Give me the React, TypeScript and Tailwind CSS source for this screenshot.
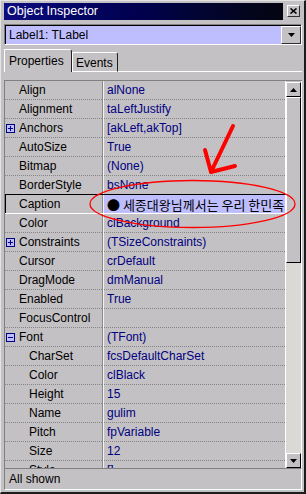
import React from 'react';

type Row = { name: string; value: string; box?: '+' | '-'; sub?: boolean; selected?: boolean };

const rows: Row[] = [
  { name: 'Align', value: 'alNone' },
  { name: 'Alignment', value: 'taLeftJustify' },
  { name: 'Anchors', value: '[akLeft,akTop]', box: '+' },
  { name: 'AutoSize', value: 'True' },
  { name: 'Bitmap', value: '(None)' },
  { name: 'BorderStyle', value: 'bsNone' },
  { name: 'Caption', value: '● 세종대왕님께서는 우리 한민족', selected: true },
  { name: 'Color', value: 'clBackground' },
  { name: 'Constraints', value: '(TSizeConstraints)', box: '+' },
  { name: 'Cursor', value: 'crDefault' },
  { name: 'DragMode', value: 'dmManual' },
  { name: 'Enabled', value: 'True' },
  { name: 'FocusControl', value: '' },
  { name: 'Font', value: '(TFont)', box: '-' },
  { name: 'CharSet', value: 'fcsDefaultCharSet', sub: true },
  { name: 'Color', value: 'clBlack', sub: true },
  { name: 'Height', value: '15', sub: true },
  { name: 'Name', value: 'gulim', sub: true },
  { name: 'Pitch', value: 'fpVariable', sub: true },
  { name: 'Size', value: '12', sub: true },
  { name: 'Style', value: '[]', sub: true },
];

function ExpandBox({ kind }: { kind: '+' | '-' }) {
  return (
    <svg width="9" height="9" viewBox="0 0 9 9" className="shrink-0 ml-[1px] mr-[4px]">
      <rect x="0.5" y="0.5" width="8" height="8" fill="#bebeff" stroke="#000080" />
      <line x1="2" y1="4.5" x2="7" y2="4.5" stroke="#000080" />
      {kind === '+' && <line x1="4.5" y1="2" x2="4.5" y2="7" stroke="#000080" />}
    </svg>
  );
}

function Divider() {
  return (
    <>
      <div className="w-px shrink-0 bg-[#8a8a8a]" />
      <div className="w-px shrink-0 bg-[#f2f2f2]" />
    </>
  );
}

function Sep({ kind }: { kind: 'dotted' | 'black' | 'white' }) {
  if (kind === 'black') return <div className="h-px shrink-0 bg-black" />;
  if (kind === 'white') return <div className="h-px shrink-0 bg-white" />;
  return (
    <div className="flex h-px shrink-0">
      <div className="w-[97px] border-t border-dotted border-[#858585]" />
      <Divider />
      <div className="flex-1 border-t border-dotted border-[#858585]" />
    </div>
  );
}

function PropRow({ row }: { row: Row }) {
  let pad = 'pl-[14px]';
  if (row.box) pad = 'pl-0';
  else if (row.sub) pad = 'pl-[24px]';
  else if (row.selected) pad = 'pl-[13px] border-l border-black';
  return (
    <div className="flex h-[18px] shrink-0">
      <div className={`w-[97px] shrink-0 flex items-center whitespace-nowrap text-black ${pad}`}>
        {row.box && <ExpandBox kind={row.box} />}
        <span>{row.name}</span>
      </div>
      <Divider />
      <div
        className={
          row.selected
            ? "flex-1 flex items-center pl-[3px] overflow-hidden whitespace-nowrap bg-[#bebeff] text-black text-[13px] font-['Noto_Sans_CJK_KR',sans-serif]"
            : 'flex-1 flex items-center pl-[3px] overflow-hidden whitespace-nowrap text-[#000080]'
        }
      >
        {row.value}
      </div>
    </div>
  );
}

export default function App() {
  return (
    <div className="relative w-[306px] h-[494px] overflow-hidden bg-[#c4c1c4] border-l border-t border-l-[#e4e4e4] border-t-[#e4e4e4] border-r-2 border-b-2 border-r-[#1c1c1c] border-b-[#1c1c1c] pl-[3px] pr-[2px] flex flex-col font-['Liberation_Sans',sans-serif] text-[12px] leading-none text-black">
      {/* Title bar */}
      <div className="mt-[2px] h-[17px] flex shrink-0">
        <div className="w-[279px] h-full flex items-center pl-[3px] text-white text-[12.5px] bg-linear-to-r from-[#0d0d80] via-[#00004c] to-[#040410]">
          Object Inspector
        </div>
        <div className="ml-[4px] mt-[2px] w-[13px] h-[12px] border-t border-l border-t-white border-l-white border-r border-b border-r-[#303030] border-b-[#303030] bg-[#c4c1c4] flex items-center justify-center">
          <svg width="7" height="6" viewBox="0 0 7 6">
            <path d="M0.5 0.5 L6.5 5.5 M6.5 0.5 L0.5 5.5" stroke="black" strokeWidth="1.6" />
          </svg>
        </div>
      </div>

      {/* Combo box */}
      <div className="mt-[4px] h-[21px] shrink-0 border-t border-l border-t-[#808080] border-l-[#808080] border-b border-r border-b-white border-r-white">
        <div className="h-full flex border-t border-l border-black bg-[#bebeff]">
          <div className="flex-1 flex items-center pl-[3px]">Label1: TLabel</div>
          <div className="w-[20px] h-full border-t border-l border-t-white border-l-white border-r border-b border-r-[#303030] border-b-[#303030] bg-[#c4c1c4] flex items-center justify-center">
            <svg width="7" height="4" viewBox="0 0 7 4">
              <path d="M0 0 H7 L3.5 4 Z" fill="black" />
            </svg>
          </div>
        </div>
      </div>

      {/* Tabs */}
      <div className="mt-[4px] h-[23px] shrink-0 flex items-end">
        <div className="w-[68px] h-[23px] border-l border-t border-l-white border-t-white border-r border-r-[#202020] rounded-tr-[3px] pl-[4px] pt-[5px] text-[12px]">
          Properties
        </div>
        <div className="w-[46px] h-[20px] border-l border-t border-l-white border-t-white border-r border-r-[#202020] border-b border-b-white rounded-tr-[3px] pl-[3px] pt-[4px] text-[12px]">
          Events
        </div>
        <div className="flex-1 h-full border-b border-b-white" />
      </div>

      {/* Tab page */}
      <div className="pt-[8px] shrink-0">
        <div className="h-[388px] flex border-t border-l border-[#808080] overflow-hidden">
          <div className="w-[280px] shrink-0 flex flex-col overflow-hidden">
            {rows.map((r, i) => {
              const next = rows[i + 1];
              const kind: 'dotted' | 'black' | 'white' = next && next.selected ? 'black' : r.selected ? 'white' : 'dotted';
              return (
                <React.Fragment key={i}>
                  <PropRow row={r} />
                  <Sep kind={kind} />
                </React.Fragment>
              );
            })}
          </div>
          {/* Scrollbar */}
          <div className="w-[16px] shrink-0 flex flex-col border-l border-white">
            <div className="mt-px h-[15px] shrink-0 border-t border-l border-t-white border-l-white border-r border-b border-black bg-[#c4c1c4] flex items-center justify-center">
              <svg width="7" height="4" viewBox="0 0 7 4">
                <path d="M0 4 H7 L3.5 0 Z" fill="black" />
              </svg>
            </div>
            <div className="h-[166px] shrink-0 border-t border-l border-t-white border-l-white border-r border-b border-black bg-[#c4c1c4]" />
            <div className="flex-1 bg-[#dad9d5]" />
            <div className="h-[15px] shrink-0 border-t border-l border-t-white border-l-white border-r border-b border-black bg-[#c4c1c4] flex items-center justify-center">
              <svg width="7" height="4" viewBox="0 0 7 4">
                <path d="M0 0 H7 L3.5 4 Z" fill="black" />
              </svg>
            </div>
          </div>
          <div className="w-px shrink-0 bg-white" />
        </div>
      </div>

      {/* Status bar */}
      <div className="h-[22px] shrink-0 border-t border-l border-t-[#808080] border-l-[#808080] border-b border-r border-b-white border-r-white flex items-center pl-[4px]">
        All shown
      </div>

      {/* Red annotation */}
      <svg className="absolute left-[-1px] top-[-1px] pointer-events-none" width="306" height="494" viewBox="0 0 306 494">
        <ellipse cx="192.5" cy="204" rx="102.5" ry="23.5" fill="none" stroke="#ff0000" strokeWidth="1.3" />
        <path d="M233 126 L211 172 M205 150 L211 172 L235 166" fill="none" stroke="#ff0000" strokeWidth="4" strokeLinecap="round" strokeLinejoin="round" />
      </svg>
    </div>
  );
}
